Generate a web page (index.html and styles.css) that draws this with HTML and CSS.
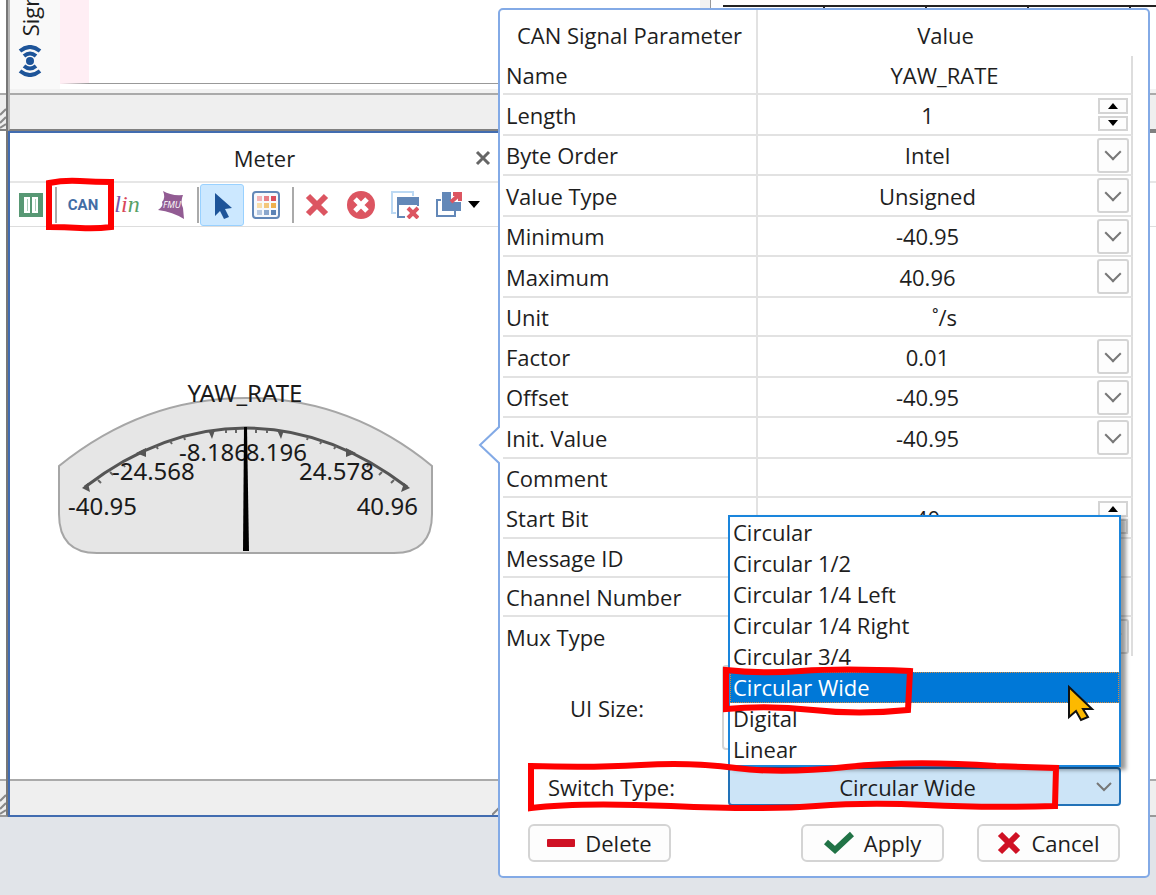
FILE: index.html
```html
<!DOCTYPE html>
<html lang="en">
<head>
    <title>Meter</title>
    <meta charset="UTF-8">
    <link rel="stylesheet" href="styles.css">
</head>
<body>

<!-- upper windows -->
<div class="row upper">
    <div class="sliver"><div class="statusbar"><svg class="grip" width="6" height="30"><path d="M0 16l6-6M0 24l6-6M0 29l6-4"/></svg></div></div>
    <div class="window signals">
        <div class="window-body">
            <div class="side">
                <span class="side-label">Signals</span>
                <svg width="24" height="32" viewBox="0 0 24 32">
                    <circle cx="12" cy="16" r="4" fill="#1d5499"/>
                    <g fill="none" stroke="#1d5499" stroke-width="4"><path d="M6 11q6-5 12 0M6 21q6 5 12 0M2 6q10-8 20 0M2 26q10 8 20 0"/></g>
                </svg>
            </div>
            <div class="plot"></div>
        </div>
        <div class="statusbar"></div>
    </div>
    <div class="window grid-window">
        <div class="window-body"><div class="cells"><i></i><i></i><i></i><i></i></div></div>
        <div class="statusbar"></div>
    </div>
</div>

<!-- lower windows -->
<div class="row lower">
    <div class="sliver"><div class="fill"></div><div class="statusbar"><svg class="grip" width="6" height="30"><path d="M0 16l6-6M0 24l6-6M0 29l6-4"/></svg></div></div>
    <div class="window meter">
        <div class="titlebar">
            <h1>Meter</h1>
            <button class="close" aria-label="Close"><svg width="16" height="16"><path d="M2 2l12 12M14 2L2 14" stroke="#666" stroke-width="3"/></svg></button>
        </div>
        <div class="toolbar">
            <button class="tool" aria-label="Pause"><svg width="24" height="24"><path fill="#589874" d="M0 0h24v24H0z"/><path fill="#fff" d="M5 4h6v16H5zM13 4h6v16h-6z"/><path fill="#589874" d="M8 6h1v12H8zM16 6h1v12h-1z" opacity=".5"/></svg></button>
            <span class="sep first"></span>
            <button class="tool can">CAN</button>
            <button class="tool lin"><i>l</i><i>i</i><i>n</i></button>
            <button class="tool" aria-label="FMU"><svg width="28" height="30" viewBox="0 0 28 30"><path fill="#925c93" d="M6 1q8 5 20 4-3 7 0 13l1 11q-11-7-26-9 6-4 4-8 4-4 1-11z"/><text x="6" y="18" class="fmu">FMU</text></svg></button>
            <span class="sep"></span>
            <button class="tool active" aria-label="Select"><svg width="24" height="30" viewBox="0 0 24 30"><path fill="#1d5499" d="M5 3l17 15-7 1 4 8-5 2-4-8-5 5z"/></svg></button>
            <button class="tool" aria-label="Grid"><svg width="28" height="28">
                <rect x="1" y="1" width="26" height="26" rx="3" fill="#f7f9fc" stroke="#6388b8" stroke-width="2"/>
                <path fill="#f3b3b7" d="M5 5h5v5H5z"/><path fill="#e98087" d="M12 5h5v5h-5z"/><path fill="#dc4f5c" d="M19 5h5v5h-5z"/>
                <path fill="#f8dda8" d="M5 12h5v5H5z"/><path fill="#f3c77b" d="M12 12h5v5h-5z"/><path fill="#eeb04d" d="M19 12h5v5h-5z"/>
                <path fill="#b5c7df" d="M5 19h5v5H5z"/><path fill="#8ba7cc" d="M12 19h5v5h-5z"/><path fill="#5c83b5" d="M19 19h5v5h-5z"/></svg></button>
            <span class="sep"></span>
            <button class="tool" aria-label="Delete item"><svg width="24" height="24"><path d="M3 3l18 18M21 3L3 21" stroke="#dc5561" stroke-width="6"/></svg></button>
            <button class="tool" aria-label="Delete all"><svg width="28" height="28"><circle cx="14" cy="14" r="14" fill="#dc5561"/><path d="M8 8l12 12M20 8L8 20" stroke="#fff" stroke-width="5"/></svg></button>
            <button class="tool" aria-label="Close windows"><svg width="28" height="28"><path d="M5 22H1V1h21v4" fill="none" stroke="#bcd9f3" stroke-width="2"/><path d="M7 26V7h20v8" fill="#fff" stroke="#6388b8" stroke-width="2"/><path fill="#6388b8" d="M6 6h22v8H6zM6 25h8v2H6z"/><path d="M17 17l10 10M27 17L17 27" stroke="#dc5561" stroke-width="4"/></svg></button>
            <button class="tool" aria-label="Export"><svg width="28" height="28"><path d="M6 9H2v16h18v-5" fill="none" stroke="#6388b8" stroke-width="2"/><path fill="#6388b8" d="M7 1h19v19H7z"/><path d="M16 0h12v11H16z" fill="#fff"/><path d="M16 11l9-8M18 3h7v7" fill="none" stroke="#dc5561" stroke-width="4"/></svg></button>
            <button class="tool more" aria-label="More"><svg width="12" height="7"><path d="M0 0h12L6 7z"/></svg></button>
        </div>
        <div class="canvas">
            <svg class="gauge" width="376" height="190" viewBox="0 -10 376 190">
                <path d="M1 90Q85 22 188 22T374 90V138Q374 177 336 177H39Q1 177 1 138z" fill="#e6e6e6" stroke="#a6a6a6" stroke-width="2"/>
                <path d="M27 111Q104 52 188 52T349 111" fill="none" stroke="#555" stroke-width="3"/>
                <path d="M24 112l8 4-2-9zM352 112l-9 4 3-9zM78 77l10-5v9zM298 77l-10-5v9zM150 54h7l-3 9zM219 54h7l-3 9z" fill="#555"/>
                <path d="M40 104l3 3M52 96l3 3M65 88l2 3M98 70l2 3M112 65l2 3M126 61l1 3M168 54v3M178 54v3M198 54v3M209 54v3M250 61l-1 3M264 65l-2 3M278 70l-2 3M311 88l-2 3M324 96l-3 3M336 104l-3 3" stroke="#666" stroke-width="2"/>
                <text x="187" y="26" text-anchor="middle">YAW_RATE</text>
                <text x="10" y="139">-40.95</text>
                <text x="54" y="104">-24.568</text>
                <text x="121" y="85">-8.186</text>
                <text x="249" y="85" text-anchor="end">8.196</text>
                <text x="316" y="104" text-anchor="end">24.578</text>
                <text x="360" y="139" text-anchor="end">40.96</text>
                <path d="M186 51h3l2 124h-6z"/>
            </svg>
        </div>
        <div class="statusbar"><svg class="grip end" width="24" height="24"><path d="M0 24L24 0M8 24L24 8M16 24l8-8"/></svg></div>
    </div>
    <div class="window blank">
        <div class="titlebar"></div>
        <div class="toolbar"></div>
        <div class="canvas"></div>
        <div class="statusbar"></div>
    </div>
</div>

<!-- signal properties popup -->
<form class="dialog" onsubmit="return false">
    <svg class="pointer" width="22" height="42"><path d="M22 2L2 21l20 19" fill="#fff" stroke="#83aae6" stroke-width="2"/></svg>
    <table>
        <thead><tr><th>CAN Signal Parameter</th><th>Value</th></tr></thead>
        <tbody>
        <tr class="plain"><td><label for="name">Name</label></td><td><input id="name" value="YAW_RATE"></td></tr>
        <tr><td><label for="length">Length</label></td><td><div class="field"><input id="length" value="1"><span class="spin"><button aria-label="Up"><svg width="10" height="6"><path d="M0 6l5-6 5 6z"/></svg></button><button aria-label="Down"><svg width="10" height="6"><path d="M0 0l5 6 5-6z"/></svg></button></span></div></td></tr>
        <tr><td><label for="order">Byte Order</label></td><td><div class="field"><select id="order"><option>Intel</option></select><span class="drop"></span></div></td></tr>
        <tr><td><label for="vtype">Value Type</label></td><td><div class="field"><select id="vtype"><option>Unsigned</option></select><span class="drop"></span></div></td></tr>
        <tr><td><label for="min">Minimum</label></td><td><div class="field"><select id="min"><option>-40.95</option></select><span class="drop"></span></div></td></tr>
        <tr><td><label for="max">Maximum</label></td><td><div class="field"><select id="max"><option>40.96</option></select><span class="drop"></span></div></td></tr>
        <tr class="plain"><td><label for="unit">Unit</label></td><td><input id="unit" value="˚/s"></td></tr>
        <tr><td><label for="factor">Factor</label></td><td><div class="field"><select id="factor"><option>0.01</option></select><span class="drop"></span></div></td></tr>
        <tr><td><label for="offset">Offset</label></td><td><div class="field"><select id="offset"><option>-40.95</option></select><span class="drop"></span></div></td></tr>
        <tr><td><label for="init">Init. Value</label></td><td><div class="field"><select id="init"><option>-40.95</option></select><span class="drop"></span></div></td></tr>
        <tr class="plain"><td><label for="comment">Comment</label></td><td><input id="comment"></td></tr>
        <tr><td><label for="start">Start Bit</label></td><td><div class="field"><input id="start" value="40"><span class="spin"><button aria-label="Up"><svg width="10" height="6"><path d="M0 6l5-6 5 6z"/></svg></button><button aria-label="Down"><svg width="10" height="6"><path d="M0 0l5 6 5-6z"/></svg></button></span></div></td></tr>
        <tr class="plain"><td><label for="msg">Message ID</label></td><td><input id="msg"></td></tr>
        <tr class="plain"><td><label for="chan">Channel Number</label></td><td><input id="chan"></td></tr>
        <tr class="plain last"><td><label for="mux">Mux Type</label></td><td><div class="field"><select id="mux"></select><span class="drop"></span></div></td></tr>
        </tbody>
    </table>
    <div class="size-row">
        <label for="size">UI Size:</label>
        <input id="size">
    </div>
    <div class="type-row">
        <label for="switch">Switch Type:</label>
        <div class="combo">
            <select id="switch"><option>Circular Wide</option></select>
            <svg class="arrow" width="16" height="10"><path d="M1 1l7 7 7-7" fill="none" stroke="#777" stroke-width="2"/></svg>
            <ul class="list" role="listbox">
                <li>Circular</li>
                <li>Circular 1/2</li>
                <li>Circular 1/4 Left</li>
                <li>Circular 1/4 Right</li>
                <li>Circular 3/4</li>
                <li class="selected">Circular Wide</li>
                <li>Digital</li>
                <li>Linear</li>
            </ul>
        </div>
    </div>
    <div class="buttons">
        <button><svg width="28" height="8"><rect width="28" height="8" rx="1" fill="#cf1124"/></svg>Delete</button>
        <span class="fill"></span>
        <button><svg width="30" height="24"><path d="M2 11l9 8L28 3" fill="none" stroke="#217346" stroke-width="6"/></svg>Apply</button>
        <button><svg width="24" height="24"><path d="M3 3l18 18M21 3L3 21" stroke="#cf1124" stroke-width="6"/></svg>Cancel</button>
    </div>
</form>

<!-- callouts and cursor -->
<svg class="marks" width="1156" height="895">
    <g fill="none" stroke="#f00" stroke-width="6">
        <path d="M49 183q15-3 31-2t31 1v45q-15 2-31 1t-31-1z"/>
        <path d="M726 670q35 4 75 1t109 0l-2 39q-50 5-95 0t-87-1z"/>
        <path d="M531 766q60 2 110-1t95 3 110-1 150-1l60 2-1 38q-70 2-129-1t-110 1-145 0-140 2z"/>
    </g>
    <path d="M1069 687l23 22h-9l5 8-7 3-5-9-7 6z" fill="#fdb900" stroke="#111" stroke-width="2"/>
</svg>

</body>
</html>
```

FILE: styles.css
```css
* {
    box-sizing: border-box;
}
body {
    margin: 0;
    min-height: 100vh;
    position: relative;
    overflow: hidden;
    background: #e1e4e9;
    color: #1e1e1e;
    font: 22px/30px "Open Sans", "Noto Sans", sans-serif;
}
button, input, select {
    font: inherit;
    color: inherit;
    margin: 0;
    padding: 0;
    border: 0;
    background: none;
    outline: 0;
}
svg {
    display: block;
    flex: none;
}
.fill {
    flex: 1;
}

/* windows */
.row {
    display: flex;
}
.upper {
    height: 131px;
}
.lower {
    height: 686px;
}
.window, .sliver {
    display: flex;
    flex-direction: column;
    background: #fff;
}
.sliver {
    width: 8px;
    border-right: 2px solid #777;
    justify-content: flex-end;
}
.upper > * {
    border-bottom: 2px solid #808080;
}
.signals {
    flex: 0 0 702px;
    border-left: 2px solid #b5b5b5;
    border-right: 10px solid #f2f2f2;
}
.window-body {
    flex: 1;
    display: flex;
    overflow: hidden;
    border-bottom: 4px solid #f2f2f2;
}
.side {
    flex: 0 0 50px;
    background: #f9f9f9;
    display: flex;
    flex-direction: column;
    justify-content: flex-end;
    align-items: center;
    gap: 9px;
    padding: 0 10px 12px 0;
}
.side-label {
    writing-mode: vertical-rl;
    transform: rotate(180deg);
}
.plot {
    flex: 1;
    margin-bottom: 5px;
    border-left: 29px solid #ffeef4;
    border-bottom: 1px solid #999;
}
.grid-window {
    flex: 1;
    border-left: 1px solid #999;
}
.cells {
    flex: 1;
    display: flex;
    margin: 5px 0 0 12px;
    border-top: 2px solid #222;
}
.cells i {
    flex: 0 0 102px;
    height: 2px;
    border-right: 2px solid #222;
}
.statusbar {
    flex: 0 0 36px;
    background: #efefef;
    border-top: 2px solid #aaa;
    display: flex;
    align-items: flex-end;
}
.grip path {
    fill: none;
    stroke: #888;
    stroke-width: 2;
}
.grip.end {
    margin-left: auto;
}
.lower > * {
    border-bottom: 2px solid #999;
}
.lower .meter {
    flex: 0 0 509px;
    border: 2px solid #426cb0;
    border-right-width: 1px;
}
.blank {
    flex: 1;
    border-top: 2px solid #808080;
}
.titlebar {
    height: 50px;
    display: flex;
    align-items: center;
    padding: 2px 25px 0 44px;
    border-bottom: 2px solid #e6e6e6;
}
.titlebar h1 {
    flex: 1;
    margin: 0;
    text-align: center;
    font-size: 22px;
    font-weight: normal;
}
.toolbar {
    height: 44px;
    display: flex;
    align-items: center;
    gap: 8px;
    padding-left: 9px;
    border-bottom: 1px solid #ddd;
}
.tool {
    display: flex;
    align-items: center;
    justify-content: center;
    flex: 0 0 36px;
    height: 40px;
}
.tool:first-child {
    flex-basis: 24px;
}
.sep {
    width: 2px;
    height: 36px;
    margin-right: -3px;
    background: #aaa;
}
.sep.first {
    margin: 0 0 0 4px;
}
.can {
    color: #426da5;
    font: bold 15px "Roboto", sans-serif;
}
.lin {
    font: italic 24px "Liberation Serif", serif;
}
.lin i:nth-child(1) { color: #7a55a8; }
.lin i:nth-child(2) { color: #d9475a; }
.lin i:nth-child(3) { color: #58a066; }
.fmu {
    font: italic 9px "Open Sans", sans-serif;
    fill: #fff;
}
.tool.active {
    flex-basis: 44px;
    height: 42px;
    margin: 0 -4px;
    background: #cce8ff;
    border: 1px solid #99d1ff;
    border-radius: 3px;
}
.tool.more {
    flex-basis: 12px;
    margin-left: -7px;
}
.canvas {
    flex: 1;
    padding: 139px 0 0 48px;
}
.gauge text {
    font: 24px "Noto Sans", sans-serif;
    fill: #1a1a1a;
}

/* popup */
.dialog {
    position: absolute;
    left: 498px;
    right: 6px;
    top: 8px;
    padding: 0 0 14px;
    background: #fff;
    border: 2px solid #83aae6;
    border-radius: 5px;
}
.pointer {
    position: absolute;
    left: -22px;
    top: 414px;
}
table {
    width: calc(100% - 18px);
    margin-left: 3px;
    border-collapse: separate;
    border-spacing: 0;
    table-layout: fixed;
}
th {
    height: 46px;
    padding: 4px 0 0;
    font-weight: normal;
    white-space: nowrap;
}
th:first-child {
    width: 253px;
}
th:last-child, td:last-child {
    border-left: 2px solid #e2e2e2;
}
td {
    height: 40px;
    padding: 0;
    border-bottom: 2px solid #e2e2e2;
}
tr:nth-child(even) td {
    height: 41px;
}
tr.plain td {
    height: 39px;
}
tr.last td {
    border-bottom: 0;
}
td:first-child {
    padding-left: 3px;
}
td:last-child {
    border-right: 2px solid #ddd;
}
td label, td input, td select, .field {
    display: block;
    height: 30px;
    line-height: 30px;
}
td input {
    width: 100%;
    text-align: center;
}
.field {
    display: flex;
    align-items: center;
    padding-right: 2px;
}
.field input, .field select {
    flex: 1;
    min-width: 0;
}
select {
    appearance: none;
    text-align: center;
    text-align-last: center;
}
.drop, .spin {
    flex: 0 0 32px;
    height: 35px;
}
.drop {
    display: flex;
    align-items: center;
    justify-content: center;
    border: 2px solid #d4d4d4;
    border-radius: 3px;
    background: #fdfdfd;
}
.drop::after {
    content: "";
    width: 10px;
    height: 10px;
    margin-top: -6px;
    border: solid #777;
    border-width: 0 2px 2px 0;
    transform: rotate(45deg);
}
.spin {
    display: flex;
    flex-direction: column;
    gap: 2px;
    padding: 1px;
}
.spin button {
    flex: 1;
    display: flex;
    align-items: center;
    justify-content: center;
    border: 2px solid #d4d4d4;
    background: #fdfdfd;
}
.size-row, .type-row, .buttons {
    display: flex;
    align-items: center;
    padding: 0 28px;
}
.size-row {
    padding-top: 9px;
}
.size-row label {
    width: 194px;
    padding-left: 42px;
}
.size-row input {
    flex: 1;
    height: 85px;
    border: 2px solid #d4d4d4;
    border-radius: 4px;
}
.type-row {
    padding: 17px 27px 0 28px;
}
.type-row label {
    width: 200px;
    padding-left: 20px;
}
.combo {
    flex: 1;
    position: relative;
}
.combo select {
    display: block;
    width: 100%;
    height: 39px;
    padding-right: 34px;
    background: #cce4f7;
    border: 2px solid #2272b8;
    border-radius: 4px;
}
.arrow {
    position: absolute;
    right: 9px;
    top: 15px;
}
.list {
    position: absolute;
    left: 0;
    right: 0;
    bottom: 100%;
    margin: 0;
    padding: 0;
    list-style: none;
    background: #fff;
    border: 2px solid #1a85dc;
    box-shadow: 5px 3px 4px rgba(0,0,0,.4);
}
.list li {
    height: 31px;
    line-height: 31px;
    padding-left: 3px;
}
.list .selected {
    background: #0078d7;
    color: #fff;
    outline: 1px dotted #d98a3a;
    outline-offset: -1px;
}
.buttons {
    gap: 33px;
    padding-top: 18px;
}
.buttons .fill {
    margin-right: -33px;
}
.buttons button {
    width: 143px;
    height: 38px;
    display: flex;
    align-items: center;
    justify-content: center;
    gap: 10px;
    border: 2px solid #d4d4d4;
    border-radius: 6px;
    background: #fdfdfd;
}
.marks {
    position: absolute;
    left: 0;
    top: 0;
    pointer-events: none;
}
```
